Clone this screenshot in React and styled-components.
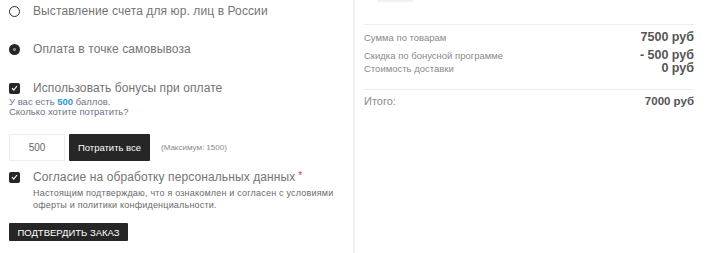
import React from "react";
import styled, { createGlobalStyle } from "styled-components";

const GlobalStyle = createGlobalStyle`
  body {
    margin: 0;
    background: #fff;
    font-family: "Liberation Sans", Arial, sans-serif;
  }
`;

const Page = styled.div`
  display: flex;
  width: 707px;
  height: 253px;
  overflow: hidden;
`;

const LeftColumn = styled.div`
  width: 344px;
  padding-left: 9px;
  border-right: 2px solid #f1f1f1;
  display: flex;
  flex-direction: column;
`;

const RightColumn = styled.div`
  width: 330px;
  padding-left: 9px;
  display: flex;
  flex-direction: column;
`;

const Option = styled.div`
  display: flex;
  align-items: center;
  gap: 13px;
  height: ${(p) => p.$h || 22}px;
  margin-top: ${(p) => p.$top || 0}px;
`;

const Radio = styled.span`
  box-sizing: border-box;
  width: 11px;
  height: 11px;
  border-radius: 50%;
  border: ${(p) => (p.$checked ? "0" : "1.6px solid #2a2a2a")};
  background: ${(p) =>
    p.$checked ? "radial-gradient(circle, #8a8a8a 0 1.2px, #262626 1.8px)" : "#fff"};
`;

const Box = styled.span`
  width: 11px;
  height: 11px;
  border-radius: 2px;
  background: #262626;
  display: flex;
  align-items: center;
  justify-content: center;
`;

const Label = styled.span`
  font-size: 12px;
  color: #747474;
  letter-spacing: 0.1px;
`;

const Required = styled.span`
  color: #e53935;
  margin-left: 3px;
  font-size: 10px;
  vertical-align: top;
`;

const Hint = styled.div`
  font-size: 9.5px;
  line-height: 10px;
  color: #6b7488;
`;

const Points = styled.b`
  color: #2f96d6;
  font-weight: bold;
`;

const SpendRow = styled.div`
  display: flex;
  align-items: center;
  margin-top: 17px;
  height: 27px;
`;

const Amount = styled.div`
  box-sizing: border-box;
  width: 56px;
  height: 27px;
  border: 1px solid #ececec;
  display: flex;
  align-items: center;
  justify-content: center;
  font-size: 10px;
  color: #666;
`;

const DarkButton = styled.div`
  box-sizing: border-box;
  background: #262626;
  color: #fff;
  font-size: ${(p) => p.$size || 10}px;
  height: ${(p) => p.$height || 27}px;
  width: ${(p) => p.$width}px;
  display: flex;
  align-items: center;
  justify-content: center;
  border-radius: 1px;
  margin-left: ${(p) => p.$left || 0}px;
  margin-top: ${(p) => p.$top || 0}px;
  text-transform: ${(p) => (p.$upper ? "uppercase" : "none")};
  white-space: nowrap;
`;

const MaxNote = styled.span`
  font-size: 8px;
  color: #8a8a8a;
  margin-left: 11px;
`;

const Desc = styled.div`
  font-size: 9px;
  line-height: 12px;
  color: #6a6a6a;
  padding-left: 24px;
  margin-top: 1px;
  letter-spacing: 0.2px;
`;

const TopStub = styled.div`
  width: 36px;
  height: 2px;
  background: #f1f1f1;
  margin-left: 13px;
`;

const Divider = styled.div`
  height: 1px;
  background: #ececec;
  margin-top: ${(p) => p.$top || 0}px;
`;

const SummaryRow = styled.div`
  display: flex;
  justify-content: space-between;
  align-items: baseline;
  line-height: ${(p) => p.$lh || 12}px;
  margin-top: ${(p) => p.$top || 0}px;
`;

const SummaryLabel = styled.span`
  font-size: ${(p) => p.$size || 9.5}px;
  color: #8a8a8a;
`;

const SummaryValue = styled.span`
  font-size: ${(p) => p.$size || 12.5}px;
  font-weight: bold;
  color: #555;
`;

const Tick = () => (
  <svg width="7" height="6" viewBox="0 0 7 6">
    <path d="M1 3.2 L2.8 5 L6 1" fill="none" stroke="#fff" strokeWidth="1.2" />
  </svg>
);

export default function App() {
  return (
    <>
      <GlobalStyle />
      <Page>
        <LeftColumn>
          <Option>
            <Radio />
            <Label>Выставление счета для юр. лиц в России</Label>
          </Option>
          <Option $top={16}>
            <Radio $checked />
            <Label>Оплата в точке самовывоза</Label>
          </Option>
          <Option $top={19} $h={18}>
            <Box>
              <Tick />
            </Box>
            <Label>Использовать бонусы при оплате</Label>
          </Option>
          <Hint>
            У вас есть <Points>500</Points> баллов.
            <br />
            Сколько хотите потратить?
          </Hint>
          <SpendRow>
            <Amount>500</Amount>
            <DarkButton $left={4} $width={81} $size={9.5}>
              Потратить все
            </DarkButton>
            <MaxNote>(Максимум: 1500)</MaxNote>
          </SpendRow>
          <Option $top={7} $h={18}>
            <Box>
              <Tick />
            </Box>
            <Label>
              Согласие на обработку персональных данных<Required>*</Required>
            </Label>
          </Option>
          <Desc>
            Настоящим подтверждаю, что я ознакомлен и согласен с условиями
            <br />
            оферты и политики конфиденциальности.
          </Desc>
          <DarkButton $top={12} $height={18} $width={119} $size={9.5} $upper>
            Подтвердить заказ
          </DarkButton>
        </LeftColumn>
        <RightColumn>
          <TopStub />
          <Divider $top={22} />
          <SummaryRow $lh={14} $top={5}>
            <SummaryLabel>Сумма по товарам</SummaryLabel>
            <SummaryValue>7500 руб</SummaryValue>
          </SummaryRow>
          <SummaryRow $top={4}>
            <SummaryLabel>Скидка по бонусной программе</SummaryLabel>
            <SummaryValue>- 500 руб</SummaryValue>
          </SummaryRow>
          <SummaryRow>
            <SummaryLabel>Стоимость доставки</SummaryLabel>
            <SummaryValue>0 руб</SummaryValue>
          </SummaryRow>
          <Divider $top={14} />
          <SummaryRow $lh={14} $top={4}>
            <SummaryLabel $size={11}>Итого:</SummaryLabel>
            <SummaryValue $size={11.5}>7000 руб</SummaryValue>
          </SummaryRow>
        </RightColumn>
      </Page>
    </>
  );
}
